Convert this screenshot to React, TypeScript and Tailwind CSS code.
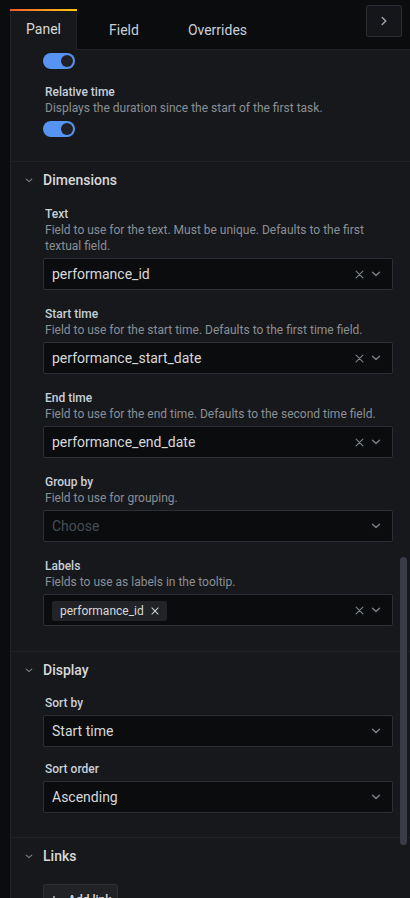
import React from "react";

const font = "font-['Roboto','Liberation_Sans',sans-serif]";

function Toggle() {
  return (
    <div className="flex h-4 w-8 items-center justify-end rounded-full bg-[#5794f2] pr-[2px]">
      <div className="h-3 w-3 rounded-full bg-[#1f2127]" />
    </div>
  );
}

function Chevron({ className = "" }: { className?: string }) {
  return (
    <svg width="10" height="6" viewBox="0 0 10 6" className={className} fill="none">
      <path d="M1.5 1.2 5 4.5 8.5 1.2" stroke="currentColor" strokeWidth="1.4" strokeLinecap="round" strokeLinejoin="round" />
    </svg>
  );
}

function Cross({ size = 9, className = "" }: { size?: number; className?: string }) {
  return (
    <svg width={size} height={size} viewBox="0 0 10 10" className={className} fill="none">
      <path d="M1.2 1.2 8.8 8.8M8.8 1.2 1.2 8.8" stroke="currentColor" strokeWidth="1.3" strokeLinecap="round" />
    </svg>
  );
}

type SelectProps = {
  value?: string;
  placeholder?: string;
  clearable?: boolean;
  tag?: string;
};

function Select({ value, placeholder, clearable, tag }: SelectProps) {
  return (
    <div className="mt-1 flex h-8 w-[350px] items-center rounded-[2px] border border-[#2c2e33] bg-[#0b0c0e] pl-2 pr-[11px]">
      <div className="flex-1 truncate text-[14px]">
        {tag ? (
          <span className="inline-flex h-5 items-center gap-[7px] rounded-[2px] bg-[#222327] px-2 text-[12px] text-[#d8d9da]">
            {tag}
            <Cross size={8} className="text-[#c7d0d9]" />
          </span>
        ) : value ? (
          <span className="text-[#d8d9da]">{value}</span>
        ) : (
          <span className="text-[#464c54]">{placeholder}</span>
        )}
      </div>
      <div className="flex items-center gap-[7px] text-[#7b8087]">
        {clearable && <Cross size={9} />}
        <Chevron />
      </div>
    </div>
  );
}

type FieldProps = {
  label: string;
  description?: string;
  className?: string;
  children: React.ReactNode;
};

function Field({ label, description, className = "mb-4", children }: FieldProps) {
  return (
    <div className={`w-[350px] ${className}`}>
      <div className="pl-[2px] text-[12px] font-medium leading-4 text-[#c7d0d9]">{label}</div>
      {description && <div className="pl-[2px] pr-[8px] text-[12px] leading-4 text-[#8a8f96]">{description}</div>}
      {children}
    </div>
  );
}

function SectionHeader({ title }: { title: string }) {
  return (
    <div className="flex h-9 items-center">
      <div className="flex w-8 justify-center pl-[3px] text-[#7b8087]">
        <Chevron className="h-[5px] w-[8px]" />
      </div>
      <span className="text-[14px] font-medium text-[#d8d9da]">{title}</span>
    </div>
  );
}

export default function App() {
  return (
    <div className={`h-[898px] w-[410px] overflow-hidden bg-[#0b0c0e] ${font}`}>
      {/* tab bar */}
      <div className="flex h-[50px] pl-[10px]">
        <div className="relative mt-[9px] flex w-[67px] items-center justify-center border-x border-[#202226] bg-[#17181b] text-[14px] text-[#d8d9da]">
          <div className="absolute inset-x-[-1px] top-0 h-[2px] bg-gradient-to-r from-[#f05a28] to-[#fbca0a]" />
          Panel
        </div>
        <div className="flex flex-1 items-center border-b border-[#202226] text-[14px] text-[#c7d0d9]">
          <span className="ml-[32px] mt-[11px]">Field</span>
          <span className="ml-[49px] mt-[11px]">Overrides</span>
          <div className="mb-[8px] ml-auto mr-[8px] flex h-8 w-9 items-center justify-center rounded-[2px] border border-[#2c2e33] bg-[#141619] text-[#9fa7b3]">
            <svg width="8" height="10" viewBox="0 0 8 10" fill="none">
              <path d="M2.2 1.5 5.8 5 2.2 8.5" stroke="currentColor" strokeWidth="1.4" strokeLinecap="round" strokeLinejoin="round" />
            </svg>
          </div>
        </div>
      </div>

      {/* options pane */}
      <div className="flex h-[848px]">
        <div className="w-[10px]" />
        <div className="relative flex-1 border-l border-[#202226] bg-[#17181b]">
          <div className="border-b border-[#202226] pb-6 pl-8 pt-[3px]">
            <Toggle />
            <Field label="Relative time" description="Displays the duration since the start of the first task." className="mt-[15px]">
              <div className="mt-[5px]">
                <Toggle />
              </div>
            </Field>
          </div>

          <div className="border-b border-[#202226] pb-[25px]">
            <SectionHeader title="Dimensions" />
            <div className="pl-8 pt-2">
              <Field label="Text" description="Field to use for the text. Must be unique. Defaults to the first textual field.">
                <Select value="performance_id" clearable />
              </Field>
              <Field label="Start time" description="Field to use for the start time. Defaults to the first time field.">
                <Select value="performance_start_date" clearable />
              </Field>
              <Field label="End time" description="Field to use for the end time. Defaults to the second time field.">
                <Select value="performance_end_date" clearable />
              </Field>
              <Field label="Group by" description="Field to use for grouping.">
                <Select placeholder="Choose" />
              </Field>
              <Field label="Labels" description="Fields to use as labels in the tooltip." className="">
                <Select tag="performance_id" clearable />
              </Field>
            </div>
          </div>

          <div className="border-b border-[#202226] pb-6">
            <SectionHeader title="Display" />
            <div className="pl-8 pt-[7px]">
              <Field label="Sort by" className="mb-[14px]">
                <Select value="Start time" />
              </Field>
              <Field label="Sort order" className="">
                <Select value="Ascending" />
              </Field>
            </div>
          </div>

          <div>
            <SectionHeader title="Links" />
            <div className="pl-8 pt-[10px]">
              <div className="inline-flex h-8 w-[75px] items-center gap-[10px] rounded-[2px] border border-[#2c2e33] bg-[#202226] pl-[6px] text-[12px] font-medium leading-4 text-[#d8d9da]">
                <svg width="8" height="8" viewBox="0 0 8 8" fill="none">
                  <path d="M4 0.5v7M0.5 4h7" stroke="currentColor" strokeWidth="1.3" strokeLinecap="round" />
                </svg>
                Add link
              </div>
            </div>
          </div>

          {/* scrollbar thumb */}
          <div className="absolute right-[3px] top-[507px] h-[288px] w-[7px] rounded-full bg-[#3a3c48]" />
        </div>
      </div>
    </div>
  );
}
